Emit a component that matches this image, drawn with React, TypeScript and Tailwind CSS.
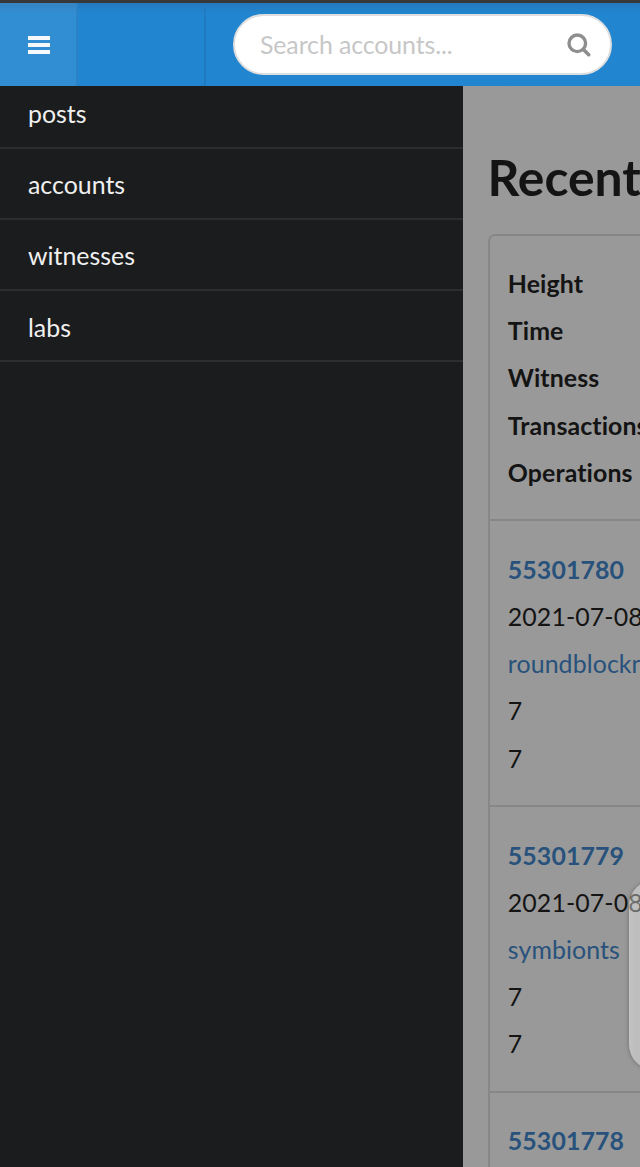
import React from 'react';

type Block = {
  height: string;
  time: string;
  witness: string;
  transactions: number;
  operations: number;
};

const menuItems = ['posts', 'accounts', 'witnesses', 'labs'];

const columns = ['Height', 'Time', 'Witness', 'Transactions', 'Operations'];

const blocks: Block[] = [
  { height: '55301780', time: '2021-07-08', witness: 'roundblockn', transactions: 7, operations: 7 },
  { height: '55301779', time: '2021-07-08', witness: 'symbionts', transactions: 7, operations: 7 },
  { height: '55301778', time: '2021-07-08', witness: '', transactions: 7, operations: 7 },
];

const Header = () => {
  return (
    <header className="flex h-[86px] shrink-0 border-t-[3px] border-[#38383a] bg-linear-to-b from-[#2579bc] to-[#2185d0] to-[10px]">
      <button className="flex w-[78px] items-center justify-center border-r-2 border-[#2b83c6] bg-white/8">
        <svg className="ml-px" width="22" height="18" viewBox="0 0 22 18" fill="#f6f9fc">
          <rect width="22" height="4" />
          <rect y="7" width="22" height="4" />
          <rect y="14" width="22" height="4" />
        </svg>
      </button>
      <div className="w-[128px] border-r-2 border-[#207bc0]" />
      <div className="mt-[11px] ml-[26.5px] flex h-[61px] w-[379.5px] items-center justify-between rounded-full border-2 border-[#dedede] bg-white pr-[19px] pl-[25.5px]">
        <span className="text-[24.9px] tracking-[-0.1px] text-[#c7c7c7]">Search accounts...</span>
        <svg className="mt-px" width="24" height="24" viewBox="0 0 24 24" fill="none" stroke="#8e8e8e">
          <circle cx="10.3" cy="10.3" r="8.3" strokeWidth="3.4" />
          <path d="M16.5 16.5 L21.7 21.7" strokeWidth="3.6" strokeLinecap="round" />
        </svg>
      </div>
    </header>
  );
};

const Sidebar = () => {
  return (
    <nav className="h-full w-[462.5px] shrink-0 overflow-hidden bg-[#1b1c1d]">
      <div className="-mt-[8.8px]">
        {menuItems.map((item) => (
          <a
            key={item}
            className="flex h-[71.3px] items-center border-b-2 border-[#2c2d2e] pt-[3px] pl-7 text-[24.9px] text-[#f0f0f0]"
          >
            {item}
          </a>
        ))}
      </div>
    </nav>
  );
};

const App = () => {
  return (
    <div className="relative flex h-[1167px] w-[640px] flex-col overflow-hidden bg-[#999999] font-['Lato',sans-serif] [font-variant-ligatures:none]">
      <Header />
      <div className="flex min-h-0 flex-1">
        <Sidebar />
        <main className="min-w-0 flex-1 overflow-hidden pl-[25px]">
          <h1 className="mt-[59px] h-[88.5px] text-[49.8px] leading-[64px] font-bold whitespace-nowrap text-[#141414]">
            Recent Blocks
          </h1>
          <div className="w-[600px] rounded-[7px] border-2 border-[#878787] text-[24.9px] leading-[47.2px] tracking-[0.1px] text-[#141414]">
            <div className="h-[285.8px] border-b-2 border-[#878787] pt-[24.5px] pl-[18.3px] font-bold">
              {columns.map((column) => (
                <div key={column}>{column}</div>
              ))}
            </div>
            {blocks.map((block) => (
              <div key={block.height} className="h-[285.8px] border-b-2 border-[#878787] pt-[24.5px] pl-[18.3px]">
                <div className="font-bold text-[#28527c]">{block.height}</div>
                <div>{block.time}</div>
                <div className="text-[#28527c]">{block.witness}</div>
                <div>{block.transactions}</div>
                <div>{block.operations}</div>
              </div>
            ))}
          </div>
        </main>
      </div>
      {/* edge panel handle */}
      <div className="absolute top-[880px] -right-[40px] h-[190px] w-[51px] rounded-[28px] bg-linear-to-r from-white/42 to-white/36 to-[6px] shadow-[0_0_4px_rgba(0,0,0,0.3)]" />
    </div>
  );
};

export default App;
